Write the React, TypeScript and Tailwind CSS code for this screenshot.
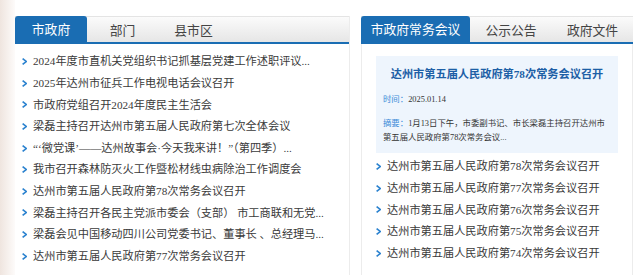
import React from "react";

const FONT = "font-['Liberation_Serif','Noto_Sans_CJK_SC',serif]";

function Bullet() {
  return (
    <svg width="5" height="7" viewBox="0 0 5 7" className="shrink-0">
      <path d="M0.6 0.6 L4.2 3.5 L0.6 6.4" fill="none" stroke="#2b82cf" strokeWidth="1.6" />
    </svg>
  );
}

const leftItems = [
  "2024年度市直机关党组织书记抓基层党建工作述职评议...",
  "2025年达州市征兵工作电视电话会议召开",
  "市政府党组召开2024年度民主生活会",
  "梁磊主持召开达州市第五届人民政府第七次全体会议",
  "“‘微党课’——达州故事会·今天我来讲！”（第四季）...",
  "我市召开森林防灭火工作暨松材线虫病除治工作调度会",
  "达州市第五届人民政府第78次常务会议召开",
  "梁磊主持召开各民主党派市委会（支部） 市工商联和无党...",
  "梁磊会见中国移动四川公司党委书记、董事长 、总经理马...",
  "达州市第五届人民政府第77次常务会议召开",
];

const rightItems = [78, 77, 76, 75, 74].map(
  (n) => `达州市第五届人民政府第${n}次常务会议召开`
);

export default function App() {
  return (
    <div className={`w-[640px] h-[275px] overflow-hidden bg-white flex ${FONT}`}>
      <div className="w-[15px] shrink-0 bg-gradient-to-r from-[#efe5df] to-[#fdfbfa]" />
      <div className="flex gap-[11px] pt-4">
        {/* Left panel */}
        <div className="w-[335px] h-[260px] border-r border-[#ececec]">
          <div className="flex h-[28px] border-b-2 border-[#1a6db3] bg-gradient-to-b from-[#fbfbfb] to-[#e6e6e6] border-t border-t-[#e4e4e4]">
            <div className="w-[72px] -mt-px bg-[#1a6db3] rounded-t-[3px] text-white text-[12.8px] flex items-center justify-center font-['Noto_Sans_CJK_SC',sans-serif]">
              市政府
            </div>
            <div className="w-[71px] text-[#444] text-[12.8px] flex items-center justify-center font-['Noto_Sans_CJK_SC',sans-serif]">
              部门
            </div>
            <div className="w-[71px] text-[#444] text-[12.8px] flex items-center justify-center font-['Noto_Sans_CJK_SC',sans-serif]">
              县市区
            </div>
          </div>
          <ul className="pt-[7px] pl-[7px]">
            {leftItems.map((t, i) => (
              <li key={i} className="h-[21.6px] flex items-center gap-[6px] text-[11.2px] text-[#3a3a3a] whitespace-nowrap">
                <Bullet />
                <span>{t}</span>
              </li>
            ))}
          </ul>
        </div>
        {/* Right panel */}
        <div className="w-[272px] h-[260px] border-x border-[#ececec]">
          <div className="flex h-[28px] border-b-2 border-[#1a6db3] bg-gradient-to-b from-[#fbfbfb] to-[#e6e6e6] border-t border-t-[#e4e4e4] -mx-px">
            <div className="w-[109px] -mt-px bg-[#1a6db3] rounded-t-[3px] text-white text-[12.8px] flex items-center justify-center font-['Noto_Sans_CJK_SC',sans-serif]">
              市政府常务会议
            </div>
            <div className="w-[82px] text-[#444] text-[12.8px] flex items-center justify-center font-['Noto_Sans_CJK_SC',sans-serif]">
              公示公告
            </div>
            <div className="w-[81px] text-[#444] text-[12.8px] flex items-center justify-center font-['Noto_Sans_CJK_SC',sans-serif]">
              政府文件
            </div>
          </div>
          <div className="mx-[14px] mt-[12px] h-[97px] bg-[#eef5fd] px-[7px] pt-[8px]">
            <div className="text-center text-[11.2px] font-bold text-[#1d5fa6] leading-[20px]">
              达州市第五届人民政府第78次常务会议召开
            </div>
            <div className="mt-[9px] text-[8.4px] leading-[14px] text-[#333]">
              <span className="text-[#3b8bd8]">时间：</span>2025.01.14
            </div>
            <div className="mt-[10px] text-[8.4px] leading-[14px] text-[#333]">
              <div>
                <span className="text-[#3b8bd8]">摘要：</span>1月13日下午，市委副书记、市长梁磊主持召开达州市
              </div>
              <div>第五届人民政府第78次常务会议...</div>
            </div>
          </div>
          <ul className="pt-[3px] pl-[14px]">
            {rightItems.map((t, i) => (
              <li key={i} className="h-[21.6px] flex items-center gap-[6px] text-[11.2px] text-[#3a3a3a] whitespace-nowrap">
                <Bullet />
                <span>{t}</span>
              </li>
            ))}
          </ul>
        </div>
      </div>
    </div>
  );
}
